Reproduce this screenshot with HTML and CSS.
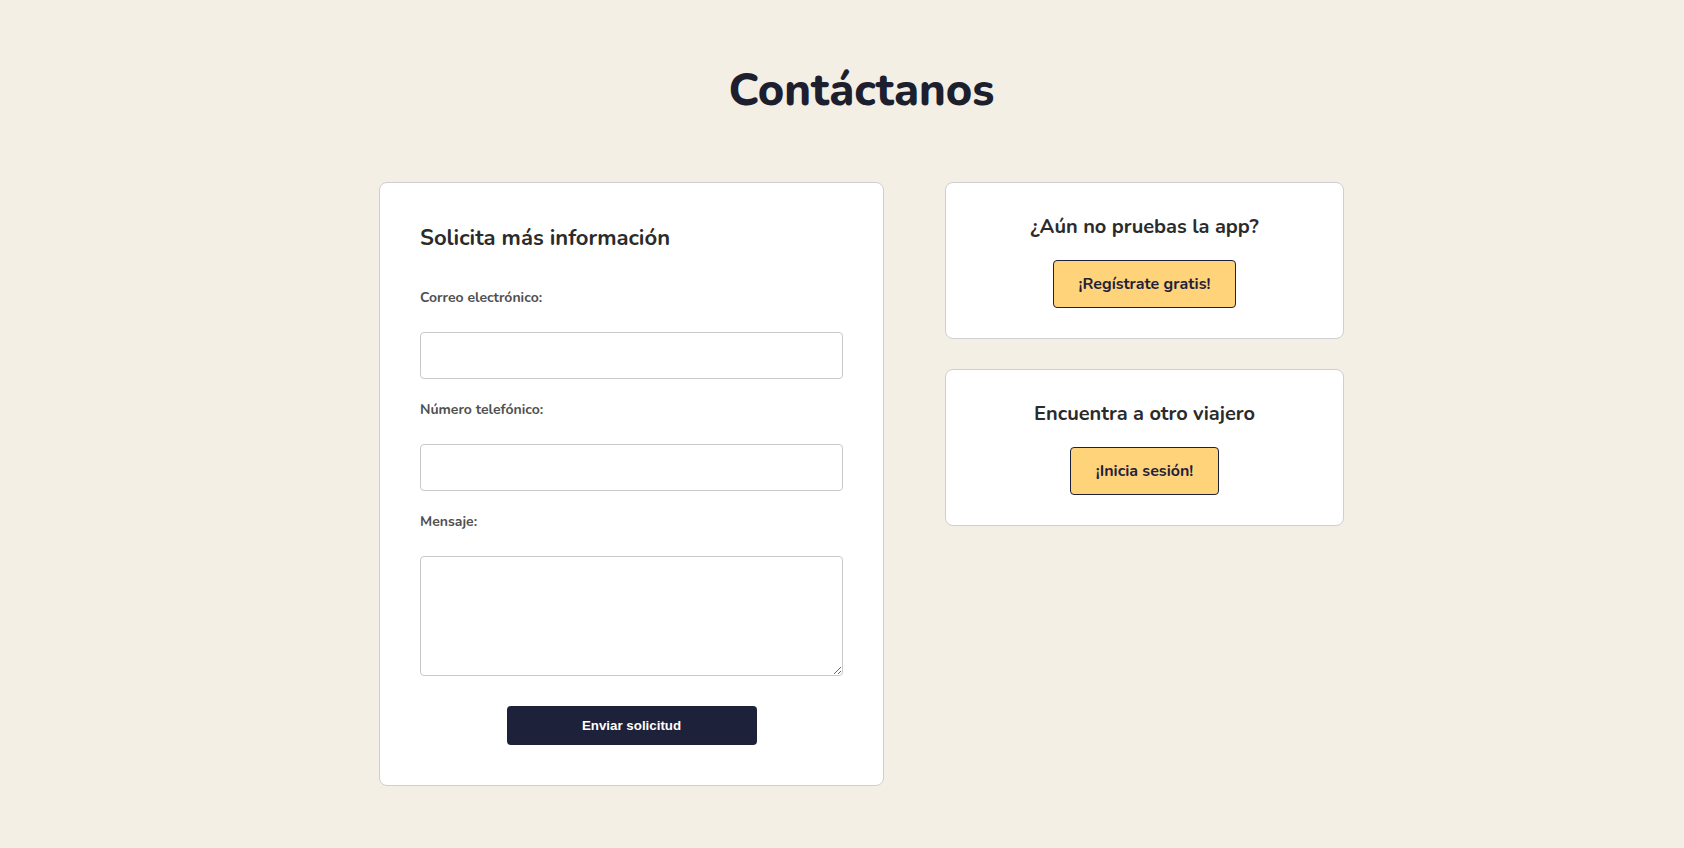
FILE: index.html
```html
<!DOCTYPE html>
<html lang="es">
<head>
<meta charset="utf-8">
<title>Contáctanos</title>
<link rel="stylesheet" href="styles.css">
</head>
<body>
<main class="page">
  <h1 class="title">Contáctanos</h1>
  <div class="layout">
    <section class="card form-card">
      <h2 class="form-title">Solicita más información</h2>
      <form class="form">
        <label class="label" for="email">Correo electrónico:</label>
        <input class="field" id="email" type="email">
        <label class="label" for="phone">Número telefónico:</label>
        <input class="field" id="phone" type="tel">
        <label class="label" for="msg">Mensaje:</label>
        <textarea class="field area" id="msg"></textarea>
        <button class="submit" type="button">Enviar solicitud</button>
      </form>
    </section>
    <div class="side">
      <section class="card cta">
        <h3 class="cta-title">¿Aún no pruebas la app?</h3>
        <button class="cta-btn" type="button">¡Regístrate gratis!</button>
      </section>
      <section class="card cta">
        <h3 class="cta-title">Encuentra a otro viajero</h3>
        <button class="cta-btn" type="button">¡Inicia sesión!</button>
      </section>
    </div>
  </div>
</main>
</body>
</html>
```
FILE: styles.css
```css
* { box-sizing: border-box; }
html, body { margin: 0; padding: 0; }
body {
  background: #f4efe5;
  font-family: Nunito, Lato, "Noto Sans", sans-serif;
  color: #2b2b2b;
}
.page {
  padding: 64px 0 40px 39px;
  display: flex;
  flex-direction: column;
  align-items: center;
}
.title {
  margin: 0 0 64px;
  font-size: 45px;
  line-height: 54px;
  font-weight: 800;
  color: #1d1f2e;
}
.layout {
  display: flex;
  gap: 61px;
  align-items: flex-start;
}
.card {
  background: #fff;
  border: 1px solid #cfcfcf;
  border-radius: 8px;
}
.form-card {
  width: 505px;
  padding: 41px 40px 40px;
}
.form-title {
  margin: 0 0 35px;
  font-size: 22px;
  line-height: 28px;
  font-weight: 700;
  color: #2b2b2b;
}
.form {
  display: flex;
  flex-direction: column;
}
.label {
  padding-top: 1px;
  font-size: 14px;
  line-height: 20px;
  font-weight: 700;
  color: #505050;
  margin-bottom: 24px;
}
.field {
  width: 100%;
  height: 47px;
  border: 1px solid #c9c9c9;
  border-radius: 4px;
  background: #fff;
  margin-bottom: 20px;
  font: inherit;
}
.area {
  height: 120px;
  margin-bottom: 30px;
  resize: vertical;
}
.submit {
  align-self: center;
  width: 250px;
  height: 39px;
  border: none;
  border-radius: 4px;
  background: #1e213a;
  color: #fff;
  font-family: "Liberation Sans", Arial, sans-serif;
  font-size: 13.33px;
  font-weight: 700;
}
.side {
  width: 399px;
  display: flex;
  flex-direction: column;
  gap: 30px;
}
.cta {
  padding: 32px 20px 30px;
  display: flex;
  flex-direction: column;
  align-items: center;
}
.cta-title {
  margin: 0 0 21px;
  font-size: 20px;
  line-height: 24px;
  font-weight: 700;
  color: #2b2b2b;
}
.cta-btn {
  height: 48px;
  padding: 0 25px;
  background: #fed37a;
  border: 1px solid #1e213a;
  border-radius: 4px;
  font-family: inherit;
  font-size: 16px;
  font-weight: 700;
  color: #1e213a;
}
```
